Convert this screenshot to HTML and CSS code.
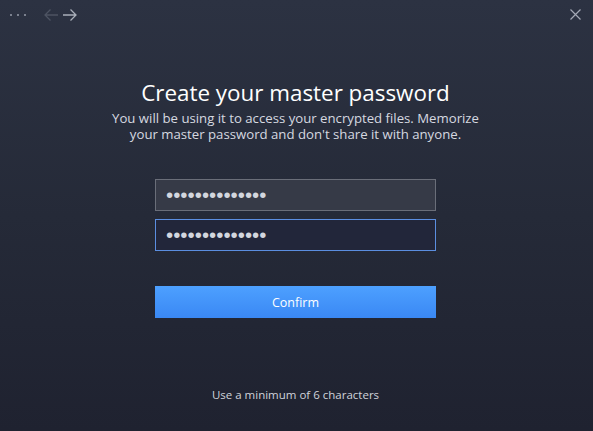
FILE: index.html
```html
<!DOCTYPE html>
<html lang="en">
<head>
  <meta charset="UTF-8">
  <title>Create master password</title>
  <link rel="stylesheet" href="styles.css">
</head>
<body>
  <div class="window">
    <div class="titlebar">
      <div class="nav">
        <span class="dots">
          <i></i><i></i><i></i>
        </span>
        <svg class="arrow back" width="16" height="14" viewBox="0 0 16 14">
          <path d="M15 7H2M7.5 1.5L2 7l5.5 5.5" fill="none" stroke="currentColor" stroke-width="1.3"/>
        </svg>
        <svg class="arrow fwd" width="16" height="14" viewBox="0 0 16 14">
          <path d="M1 7h13M8.5 1.5L14 7l-5.5 5.5" fill="none" stroke="currentColor" stroke-width="1.3"/>
        </svg>
      </div>
      <svg class="close" width="11" height="11" viewBox="0 0 11 11">
        <path d="M0.5 0.5l10 10M10.5 0.5l-10 10" stroke="currentColor" stroke-width="1.2"/>
      </svg>
    </div>

    <div class="content">
      <h1>Create your master password</h1>
      <p class="lead">You will be using it to access your encrypted files. Memorize<br>your master password and don't share it with anyone.</p>

      <form class="form">
        <input class="field" type="password" value="11111111111111">
        <input class="field active" type="password" value="11111111111111">
        <button class="btn" type="button">Confirm</button>
      </form>

      <p class="hint">Use a minimum of 6 characters</p>
    </div>
  </div>
</body>
</html>
```

FILE: styles.css
```css
html, body {
  margin: 0;
  height: 100%;
}

body {
  font-family: 'Open Sans', 'Noto Sans', sans-serif;
  color: #e6e8ee;
}

.window {
  height: 100%;
  display: flex;
  flex-direction: column;
  background: linear-gradient(to bottom, #2c3242 0%, #252a38 50%, #1f2230 100%);
}

.titlebar {
  height: 30px;
  display: flex;
  align-items: center;
  justify-content: space-between;
  padding: 0 12px 0 10px;
}

.nav {
  display: flex;
  align-items: center;
}

.dots {
  display: flex;
  gap: 5px;
  margin-right: 17px;
}

.dots i {
  width: 2px;
  height: 2px;
  background: #7a808e;
}

.arrow {
  display: block;
}

.arrow.back {
  color: #4d5362;
  margin-right: 3px;
}

.arrow.fwd {
  color: #a9aeb9;
}

.close {
  color: #a4a9b5;
  margin-top: -2px;
}

.content {
  display: flex;
  flex-direction: column;
  align-items: center;
  text-align: center;
  padding-right: 2px;
}

h1 {
  margin: 50px 0 0;
  font-size: 22.4px;
  font-weight: 400;
  line-height: 26px;
  color: #ffffff;
}

.lead {
  margin: 4px 0 0;
  font-size: 13.2px;
  line-height: 16px;
  color: #d6d9e0;
}

.form {
  width: 281px;
  margin-top: 37px;
  display: flex;
  flex-direction: column;
}

.field {
  box-sizing: border-box;
  height: 32px;
  margin-bottom: 8px;
  padding: 0 10px;
  border: 1px solid #6a6e79;
  background: #363a47;
  color: #d3d6de;
  font-family: 'Liberation Sans', Arial, sans-serif;
  font-size: 20.5px;
  letter-spacing: 0;
  outline: none;
}

.field.active {
  border-color: #5b8ee0;
  background: #22263a;
}

.btn {
  height: 32px;
  margin-top: 27px;
  border: 0;
  background: linear-gradient(to bottom, #4da0ff, #3a88f4);
  color: #ffffff;
  font-family: 'Open Sans', 'Noto Sans', sans-serif;
  font-size: 12.5px;
}

.hint {
  margin: 69px 0 0;
  font-size: 11.5px;
  color: #d0d3db;
}
```
